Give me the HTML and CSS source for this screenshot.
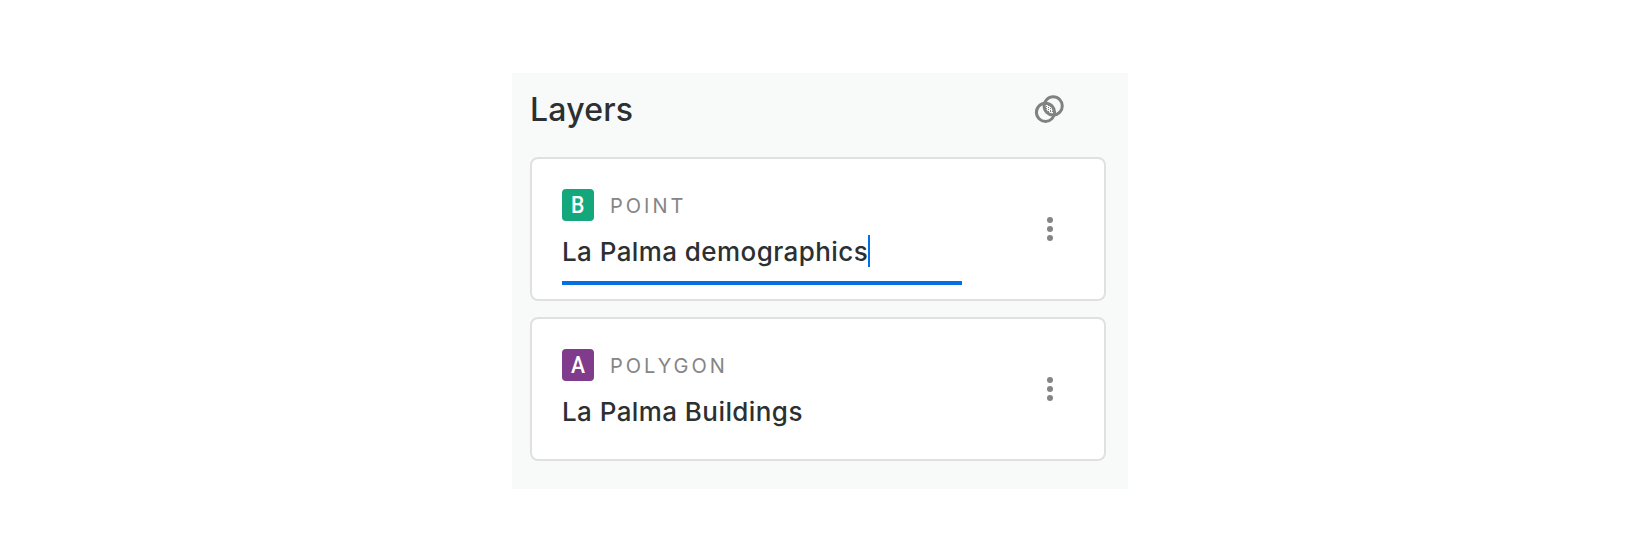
FILE: index.html
```html
<!DOCTYPE html>
<html lang="en">
<head>
<meta charset="utf-8">
<title>Layers</title>
<link rel="stylesheet" href="styles.css">
</head>
<body>
<main class="panel">
  <header class="panel-header">
    <h1 class="title">Layers</h1>
    <svg class="blend" width="32" height="32" viewBox="0 0 32 32" fill="none" stroke="#818181" stroke-width="3">
      <circle cx="11.5" cy="19.3" r="9.1"/>
      <circle cx="19.2" cy="12.9" r="9.1"/>
      <path d="M12.5 13v1M14.5 12v1M14.5 14v1M16.5 13v1M12.5 15v1M16.5 15v1M14.5 16v1M18.5 15v2M16.5 17v2M14.5 18v1M18.5 18v1" stroke-width="1"/>
    </svg>
  </header>
  <section class="card">
    <div class="info">
      <div class="meta"><span class="badge green"><span class="letter">B</span></span><span class="kind">POINT</span></div>
      <div class="name editing"><span>La Palma demographics</span><i class="caret"></i></div>
    </div>
    <svg class="more" width="6" height="24" viewBox="0 0 6 24" fill="#858585"><circle cx="3" cy="3" r="3"/><circle cx="3" cy="12" r="3"/><circle cx="3" cy="21" r="3"/></svg>
  </section>
  <section class="card">
    <div class="info">
      <div class="meta"><span class="badge purple"><span class="letter">A</span></span><span class="kind">POLYGON</span></div>
      <div class="name"><span>La Palma Buildings</span></div>
    </div>
    <svg class="more" width="6" height="24" viewBox="0 0 6 24" fill="#858585"><circle cx="3" cy="3" r="3"/><circle cx="3" cy="12" r="3"/><circle cx="3" cy="21" r="3"/></svg>
  </section>
</main>
</body>
</html>
```

FILE: styles.css
```css
* { box-sizing: border-box; }
body {
  margin: 0;
  padding-top: 73px;
  background: #fff;
  color: #2c3032;
  font-family: Inter, "Liberation Sans", sans-serif;
}
.panel {
  width: 616px;
  height: 416px;
  margin: 0 auto;
  padding: 0 22px 0 18px;
  background: #f8faf9;
}
.panel-header {
  display: flex;
  justify-content: space-between;
  align-items: flex-start;
  height: 84px;
  padding: 16px 40px 0 0;
}
.title {
  margin: 0;
  padding-top: 1px;
  font-size: 32px;
  line-height: 40px;
  font-weight: 500;
  letter-spacing: 0.2px;
}
.blend { margin-top: 4px; }
.card {
  display: flex;
  justify-content: space-between;
  width: 576px;
  height: 144px;
  padding: 30px 51px 0 30px;
  border: 2px solid #e0e0e0;
  border-radius: 8px;
  background: #fff;
}
.card + .card { margin-top: 16px; }
.info { width: 400px; }
.meta {
  display: flex;
  align-items: center;
  gap: 16px;
  height: 32px;
}
.badge {
  width: 32px;
  height: 32px;
  border-radius: 4px;
  color: #fff;
  font: 500 24px/32px Roboto, sans-serif;
  text-align: center;
}
.letter {
  display: inline-block;
  transform: scaleX(0.88);
}
.green { background: #14a77b; }
.purple { background: #803b8c; }
.kind {
  padding-top: 2px;
  color: #858585;
  font-size: 20px;
  line-height: 32px;
  letter-spacing: 3px;
}
.name {
  display: flex;
  align-items: center;
  height: 64px;
  padding-bottom: 4px;
  font-size: 26px;
  line-height: 32px;
  font-weight: 500;
  letter-spacing: 0.42px;
}
.name span { padding-top: 2px; }
.editing {
  padding-bottom: 0;
  border-bottom: 4px solid #036fe2;
}
.caret {
  width: 2px;
  height: 32px;
  background: #036fe2;
}
.more { margin-top: 28px; }
```
